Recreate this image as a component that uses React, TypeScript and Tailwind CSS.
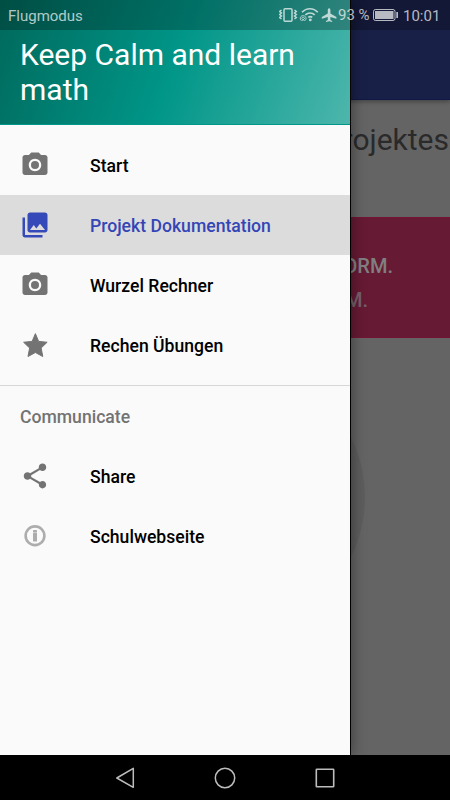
import React from "react";

const paths = {
  camera:
    "M9 2 7.17 4H4c-1.1 0-2 .9-2 2v12c0 1.1.9 2 2 2h16c1.1 0 2-.9 2-2V6c0-1.1-.9-2-2-2h-3.17L15 2H9zm3 15c-2.76 0-5-2.24-5-5s2.24-5 5-5 5 2.24 5 5-2.24 5-5 5z",
  gallery:
    "M22 16V4c0-1.1-.9-2-2-2H8c-1.1 0-2 .9-2 2v12c0 1.1.9 2 2 2h12c1.1 0 2-.9 2-2zm-11-4 2.03 2.71L16 11l4 5H8l3-4zM2 6v14c0 1.1.9 2 2 2h14v-2H4V6H2z",
  share:
    "M18 16.08c-.76 0-1.44.3-1.96.77L8.91 12.7c.05-.23.09-.46.09-.7s-.04-.47-.09-.7l7.05-4.11c.54.5 1.25.81 2.04.81 1.66 0 3-1.34 3-3s-1.34-3-3-3-3 1.34-3 3c0 .24.04.47.09.7L8.04 9.81C7.5 9.31 6.79 9 6 9c-1.66 0-3 1.34-3 3s1.34 3 3 3c.79 0 1.5-.31 2.04-.81l7.12 4.16c-.05.21-.08.43-.08.65 0 1.61 1.31 2.92 2.92 2.92 1.61 0 2.92-1.31 2.92-2.92s-1.31-2.92-2.92-2.92z",
  star: "M12.3 2.9 14.9 9.1 21.7 9.8 16.9 14.4 18.2 21.2 12.3 18 6.4 21.2 7.7 14.4 2.9 9.8 9.7 9.1z",
};

type IconName = keyof typeof paths | "info";

function Icon({ name }: { name: IconName }) {
  return (
    <svg viewBox="0 0 24 24" className="h-[30px] w-[30px] shrink-0" fill="currentColor">
      {name === "camera" && (
        <>
          <path d={paths.camera} />
          <circle cx="12" cy="12" r="3.2" />
        </>
      )}
      {name === "gallery" && <path d={paths.gallery} />}
      {name === "share" && <path d={paths.share} />}
      {name === "star" && <path d={paths.star} stroke="currentColor" strokeWidth=".8" strokeLinejoin="round" />}
      {name === "info" && (
        <g className="text-[#adadad]">
          <circle cx="12" cy="11.8" r="7.5" fill="none" stroke="currentColor" strokeWidth="2.1" />
          <rect x="10.4" y="7.1" width="3.2" height="2" rx=".5" />
          <rect x="10.4" y="9.4" width="3.2" height="7" rx=".5" />
        </g>
      )}
    </svg>
  );
}

function Item({ icon, label, active = false }: { icon: IconName; label: string; active?: boolean }) {
  return (
    <div
      className={`flex h-[60px] items-center gap-10 pl-5 text-[17.6px] font-medium ${
        active ? "bg-[#dcdcdc] text-[#3446b5]" : "text-black"
      }`}
    >
      <Glyph icon={icon} active={active} />
      <span className="pt-[2px]">{label}</span>
    </div>
  );
}

function Glyph({ icon, active }: { icon: IconName; active: boolean }) {
  return (
    <span className={active ? "text-[#3649b8]" : "text-[#737373]"}>
      <Icon name={icon} />
    </span>
  );
}

function StatusBar() {
  return (
    <div className="absolute inset-x-0 top-0 flex h-[30px] items-center bg-black/25 pl-2 text-[15.8px] text-white/70">
      <span className="flex-1 pt-0.5 text-[15px]">Flugmodus</span>
      <svg width="70" height="30" viewBox="0 0 70 30" className="shrink-0" fill="none" stroke="currentColor">
        <rect x="5" y="8.7" width="8" height="12.6" rx="1" strokeWidth="1.5" />
        <path d="m2.5 10-1.8 1.5 1.8 1.5-1.8 1.5 1.8 1.5-1.8 1.5 1.8 1.5M15.5 10l1.8 1.5-1.8 1.5 1.8 1.5-1.8 1.5 1.8 1.5-1.8 1.5" strokeWidth="1.5" />
        <path d="M23 12.3c4.4-4.8 11.4-4.8 15.8 0M26.3 14.9c2.8-2.6 6.8-2.6 9.4 0M29.3 17.4c1.2-1 2.8-1 4 0" strokeWidth="1.6" />
        <circle cx="31.3" cy="19.9" r="1.4" fill="currentColor" stroke="none" />
        <path d="M22.3 20.7c-2-2.2-.9-5 1.8-5s4 2.8 1.9 5M23 19.1c-.5-1 .2-1.8 1.1-1.8s1.7.8 1.2 1.8M24.1 19l-1.2 2M24.1 19l1.3 2" strokeWidth=".9" />
        <path
          d="M50.1 8.2c.8 0 1.3.8 1.3 1.8v3.6l6 3.5v1.6l-6-1.8v3l1.8 1.2V22l-3.1-.8-3.1.8v-.9l1.8-1.2v-3l-6 1.8v-1.6l6-3.5V10c0-1 .5-1.8 1.3-1.8z"
          fill="currentColor"
          stroke="none"
        />
      </svg>
      <span className="-ml-[11px] w-[34px] whitespace-nowrap text-[15px]">93 %</span>
      <svg width="27" height="14" viewBox="0 0 27 14" className="mr-[4px] shrink-0" fill="currentColor">
        <rect x="1.5" y="1.5" width="21.5" height="11" rx="2" fill="none" stroke="currentColor" />
        <rect x="3" y="3" width="18.5" height="8" />
        <rect x="24.3" y="4" width="1.7" height="6" />
      </svg>
      <span className="w-[47px] whitespace-nowrap pt-0.5 text-[15px]">10:01</span>
    </div>
  );
}

export default function App() {
  return (
    <div className="relative flex h-[800px] w-[450px] flex-col overflow-hidden bg-black font-['Roboto',sans-serif]">
      <div className="relative flex h-[755px] flex-col overflow-hidden bg-[#646464]">
        <div className="h-[100px] shrink-0 border-b border-[#101946] bg-[#192048] shadow-[0_2px_4px_rgba(0,0,0,0.3)]" />
        <div className="flex h-[117px] shrink-0 justify-end pr-px pt-[21px] text-[30px] leading-[38px] text-[#2a2a2a]">
          Projektes
        </div>
        <div className="flex h-[121px] shrink-0 flex-col items-end border-y border-[#731437] bg-[#661a34] pt-[31px] text-[20px] font-medium leading-[34px] text-[#808080]">
          <span className="pr-[57px]">NORM.</span>
          <span className="pr-[82px] text-[#75606a]">FORM.</span>
        </div>
        <div className="ml-[95px] mt-[24px] h-[270px] w-[270px] shrink-0 rounded-full bg-[#5d5d5d]" />
      </div>

      <div className="absolute left-0 top-0 flex h-[755px] w-[351px] flex-col border-r border-black bg-[#fafafa] shadow-[2px_0_12px_rgba(0,0,0,0.35)]">
        <div className="h-[125px] shrink-0 border-b border-[#009688] bg-[linear-gradient(109.65deg,#00695c_0%,#009688_50%,#4db6ac_100%)] pl-5 pt-[37px] text-[30px] leading-[35px] text-white">
          Keep Calm and learn
          <br />
          math
        </div>
        <nav className="flex flex-col pt-[10px]">
          <Item icon="camera" label="Start" />
          <Item icon="gallery" label="Projekt Dokumentation" active />
          <Item icon="camera" label="Wurzel Rechner" />
          <Item icon="star" label="Rechen Übungen" />
          <div className="mt-[10px] h-px bg-[#d6d6d6]" />
          <div className="flex h-[60px] items-center pl-5 pt-[3px] text-[17.6px] font-medium text-[#737373]">Communicate</div>
          <Item icon="share" label="Share" />
          <Item icon="info" label="Schulwebseite" />
        </nav>
      </div>

      <StatusBar />

      <div className="flex h-[45px] shrink-0 items-center justify-center gap-[76px] text-[#bdbdbd]">
        <svg width="24" height="24" viewBox="0 0 24 24" fill="none" stroke="currentColor" strokeWidth="1.5" strokeLinejoin="round">
          <path d="M20.3 2.3v19L3.8 12z" />
        </svg>
        <svg width="24" height="24" viewBox="0 0 24 24" fill="none" stroke="currentColor" strokeWidth="1.5">
          <circle cx="12" cy="12" r="9.7" />
        </svg>
        <svg width="24" height="24" viewBox="0 0 24 24" fill="none" stroke="currentColor" strokeWidth="1.6">
          <rect x="3.3" y="3.3" width="17.4" height="17.4" rx=".5" />
        </svg>
      </div>
    </div>
  );
}
